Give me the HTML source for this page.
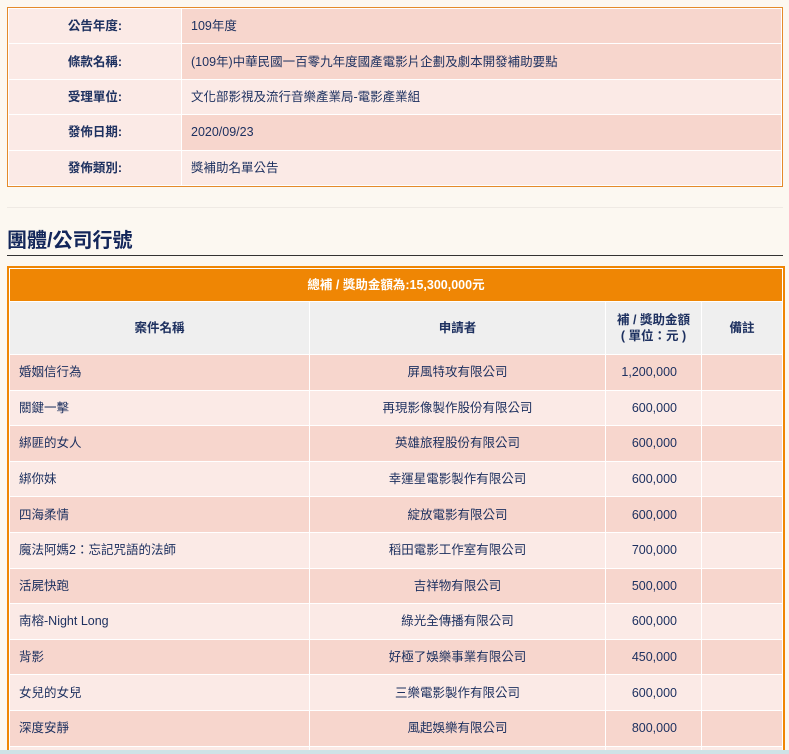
<!DOCTYPE html>
<html><head><meta charset="utf-8"><style>
html,body{margin:0;width:789px;height:754px;overflow:hidden}
body{background:#fcf8f1;font-family:"Liberation Sans","Noto Sans CJK TC",sans-serif;font-size:12.5px;color:#1e3160;position:relative}
.w{position:absolute;left:7px;width:774px;box-sizing:content-box}
table{border-collapse:collapse;width:100%;table-layout:fixed}
td,th{border:1px solid #fff;padding:0;vertical-align:middle;line-height:16px}
#w1{top:7px;border:1px solid #e48a2a}
#t1 td{height:34.4px}
#t1 td.l{width:172px;text-align:center;font-weight:bold;background:#fbeae6}
#t1 td.v{padding-left:9px}
.a{background:#f7d6cd}.b{background:#fbeae6}
#sep{position:absolute;left:7px;top:207px;width:776px;height:1px;background:#efeae4}
h2{position:absolute;left:7px;top:229px;margin:0;width:776px;font-size:20px;font-weight:bold;color:#13265a;border-bottom:1px solid #333;padding-bottom:2px;line-height:24px}
#w2{top:266px;border:2px solid #ef8604;border-bottom:none;height:490px;overflow:hidden}
#t2 th.o{background:#ef8604;color:#fff;height:32px;font-weight:bold}
#t2 th.g{background:#efefef;height:52px;font-weight:bold}
#t2 td{height:34.6px}
#t2 td.n{padding-left:9px}
#t2 td.c{text-align:center}
#t2 td.m{text-align:right;padding-right:24px}
#bar{position:absolute;left:0;top:750px;width:789px;height:4px;background:#cfe2e6}
</style></head><body>
<div class="w" id="w1"><table id="t1">
<tr><td class="l">公告年度:</td><td class="v a">109年度</td></tr>
<tr><td class="l">條款名稱:</td><td class="v a">(109年)中華民國一百零九年度國產電影片企劃及劇本開發補助要點</td></tr>
<tr><td class="l">受理單位:</td><td class="v b">文化部影視及流行音樂產業局-電影產業組</td></tr>
<tr><td class="l">發佈日期:</td><td class="v a">2020/09/23</td></tr>
<tr><td class="l">發佈類別:</td><td class="v b">獎補助名單公告</td></tr>
</table></div>
<div id="sep"></div>
<h2>團體/公司行號</h2>
<div class="w" id="w2"><table id="t2">
<colgroup><col style="width:300px"><col style="width:296px"><col style="width:96px"><col></colgroup>
<tr><th class="o" colspan="4">總補 / 獎助金額為:15,300,000元</th></tr>
<tr><th class="g">案件名稱</th><th class="g">申請者</th><th class="g">補 / 獎助金額<br>( 單位：元 )</th><th class="g">備註</th></tr>
<tr class="a"><td class="n">婚姻信行為</td><td class="c">屏風特攻有限公司</td><td class="m">1,200,000</td><td></td></tr>
<tr class="b"><td class="n">關鍵一擊</td><td class="c">再現影像製作股份有限公司</td><td class="m">600,000</td><td></td></tr>
<tr class="a"><td class="n">綁匪的女人</td><td class="c">英雄旅程股份有限公司</td><td class="m">600,000</td><td></td></tr>
<tr class="b"><td class="n">綁你妹</td><td class="c">幸運星電影製作有限公司</td><td class="m">600,000</td><td></td></tr>
<tr class="a"><td class="n">四海柔情</td><td class="c">綻放電影有限公司</td><td class="m">600,000</td><td></td></tr>
<tr class="b"><td class="n">魔法阿媽2：忘記咒語的法師</td><td class="c">稻田電影工作室有限公司</td><td class="m">700,000</td><td></td></tr>
<tr class="a"><td class="n">活屍快跑</td><td class="c">吉祥物有限公司</td><td class="m">500,000</td><td></td></tr>
<tr class="b"><td class="n">南榕-Night Long</td><td class="c">綠光全傳播有限公司</td><td class="m">600,000</td><td></td></tr>
<tr class="a"><td class="n">背影</td><td class="c">好極了娛樂事業有限公司</td><td class="m">450,000</td><td></td></tr>
<tr class="b"><td class="n">女兒的女兒</td><td class="c">三樂電影製作有限公司</td><td class="m">600,000</td><td></td></tr>
<tr class="a"><td class="n">深度安靜</td><td class="c">風起娛樂有限公司</td><td class="m">800,000</td><td></td></tr>
<tr class="b"><td class="n">&nbsp;</td><td></td><td></td><td></td></tr>
</table></div>
<div id="bar"></div>
</body></html>
